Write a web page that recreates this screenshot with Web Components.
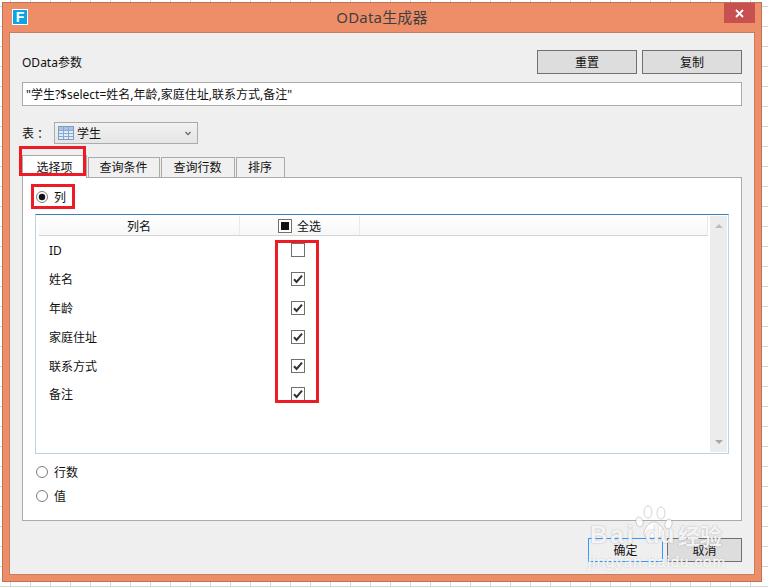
<!DOCTYPE html>
<html>
<head>
<meta charset="utf-8">
<title>OData生成器</title>
<style>
html,body{margin:0;height:100%;overflow:hidden;}
body{
    position:relative;
    background-color:#fff;
    background-image:linear-gradient(to right,#d6d6d6 1px,transparent 1px),linear-gradient(to bottom,#d6d6d6 1px,transparent 1px);
    background-size:20px 20px;
    background-position:10px 6px;
    font:12px "Noto Sans","Noto Sans CJK SC",sans-serif;
    color:#111;
}
</style>
</head>
<body>
<dlg-window heading="OData生成器">
    <dlg-form></dlg-form>
</dlg-window>
<red-mark style="left:19px;top:146px;width:67px;height:30px"></red-mark>
<red-mark style="left:31px;top:184px;width:44px;height:25px"></red-mark>
<red-mark style="left:275px;top:240px;width:44px;height:163px"></red-mark>
<baidu-mark></baidu-mark>

<script>
class DlgWindow extends HTMLElement{
    constructor(){
        super()
        this.attachShadow({mode:'open'})
    }
    connectedCallback(){
        this.shadowRoot.innerHTML = `
        <style>
            :host{
                display:block;box-sizing:border-box;
                margin:2px 0 0 2px;width:760px;height:580px;
                background:#ed8e69;border:1px solid #bd7355;
            }
            .bar{display:flex;align-items:flex-start;height:30px;}
            .logo{
                box-sizing:border-box;width:16px;height:16px;margin:6px 0 0 9px;
                background:#0aa5e8;border:1px solid #fff;color:#fff;
                font:bold 14px/14px "Liberation Sans",sans-serif;text-align:center;
            }
            h1{
                flex:1;margin:0 0 0 12px;padding:3px 0 0 0;text-align:center;
                font-size:15px;line-height:22px;font-weight:400;color:#3f3f3f;letter-spacing:.2px;
            }
            .close{
                display:flex;align-items:center;justify-content:center;
                width:31px;height:20px;margin-right:6px;background:#c75050;
            }
            .body{
                box-sizing:border-box;margin:0 7px;height:541px;
                background:#efefef;box-shadow:0 0 0 1px #c67e60;
            }
        </style>
        <div class="bar">
            <div class="logo">F</div>
            <h1>${this.getAttribute('heading')}</h1>
            <div class="close">
                <svg width="9" height="9" viewBox="0 0 9 9"><path d="M1 1 8 8M8 1 1 8" stroke="#fff" stroke-width="1.8"/></svg>
            </div>
        </div>
        <div class="body"><slot></slot></div>
        `
    }
}

class DlgButton extends HTMLElement{
    constructor(){
        super()
        this.attachShadow({mode:'open'})
    }
    connectedCallback(){
        this.shadowRoot.innerHTML = `
        <style>
            :host{
                display:flex;align-items:center;justify-content:center;box-sizing:border-box;
                width:var(--w,100px);height:24px;background:#ddd;border:1px solid #707070;
            }
            :host([focused]){background:#efefef;border-color:#3399ff;}
        </style>
        <slot></slot>
        `
    }
}

class DlgCombo extends HTMLElement{
    constructor(){
        super()
        this.attachShadow({mode:'open'})
    }
    connectedCallback(){
        this.shadowRoot.innerHTML = `
        <style>
            :host{
                display:flex;align-items:center;box-sizing:border-box;
                width:144px;height:22px;padding:0 6px 0 3px;
                border:1px solid #ababab;background:linear-gradient(#f1f1f1,#e5e5e5);
            }
            svg{display:block;}
            .text{flex:1;margin-left:3px;}
        </style>
        <svg width="16" height="14" viewBox="0 0 16 14">
            <rect x=".5" y=".5" width="15" height="13" fill="#e3edf8" stroke="#7b9cc6"/>
            <rect x="1" y="1" width="14" height="3" fill="#a9c4e6"/>
            <path d="M1 4.5H15M1 7.5H15M1 10.5H15M5.5 1V13M10.5 1V13" stroke="#8aa8cf" fill="none"/>
        </svg>
        <div class="text"><slot></slot></div>
        <svg width="6" height="5" viewBox="0 0 6 5"><path d="M.5 1 3 3.6 5.5 1" stroke="#666" stroke-width="1.3" fill="none"/></svg>
        `
    }
}

class DlgTabs extends HTMLElement{
    constructor(){
        super()
        this.attachShadow({mode:'open'})
    }
    connectedCallback(){
        const tabs = this.getAttribute('items').split(',')
        this.shadowRoot.innerHTML = `
        <style>
            :host{display:flex;align-items:flex-end;height:23px;margin-bottom:-1px;position:relative;}
            div{
                box-sizing:border-box;height:21px;margin-right:1px;border:1px solid #ababab;
                background:#f0f0f0;display:flex;align-items:center;justify-content:center;
                padding:0 1px 1px 0;
            }
            .on{height:23px;background:#fff;border-bottom:0;padding:0;}
        </style>
        ${tabs.map((t,i)=>`<div class="${i==0?'on':''}" style="width:${[65,72,74,49][i]}px">${t}</div>`).join('')}
        `
    }
}

class DlgRadio extends HTMLElement{
    constructor(){
        super()
        this.attachShadow({mode:'open'})
    }
    connectedCallback(){
        const dot = this.hasAttribute('checked') ? '<circle cx="6" cy="6" r="3.2" fill="#111"/>' : ''
        this.shadowRoot.innerHTML = `
        <style>
            :host{display:flex;align-items:center;height:20px;margin-left:1px;}
            svg{margin-right:6px;}
        </style>
        <svg width="12" height="12" viewBox="0 0 12 12"><circle cx="6" cy="6" r="5.5" fill="#fff" stroke="#7a7a7a"/>${dot}</svg>
        <slot></slot>
        `
    }
}

class DlgCheck extends HTMLElement{
    constructor(){
        super()
        this.attachShadow({mode:'open'})
    }
    connectedCallback(){
        const state = this.getAttribute('state')
        let mark = ''
        if(state=='on') mark = '<path d="M3 7.2 5.6 10 11 3.6" stroke="#333" stroke-width="2" fill="none"/>'
        if(state=='mixed') mark = '<rect x="3" y="3" width="8" height="8" fill="#111"/>'
        this.shadowRoot.innerHTML = `
        <style>
            :host{display:block;width:14px;height:14px;}
            svg{display:block;}
        </style>
        <svg width="14" height="14" viewBox="0 0 14 14"><rect x=".5" y=".5" width="13" height="13" fill="#fff" stroke="#707070"/>${mark}</svg>
        `
    }
}

class DlgGrid extends HTMLElement{
    constructor(){
        super()
        this.attachShadow({mode:'open'})
    }
    connectedCallback(){
        const rows = [['ID',''],['姓名','on'],['年龄','on'],['家庭住址','on'],['联系方式','on'],['备注','on']]
        this.shadowRoot.innerHTML = `
        <style>
            :host{
                display:flex;box-sizing:border-box;width:694px;height:240px;margin-top:7px;
                padding:1px 1px 1px 3px;
                border:1px solid #b9d4e6;border-top-color:#3b7fb5;
            }
            .main{flex:1;margin-right:2px;}
            .head{
                display:grid;grid-template-columns:201px 120px 1fr;height:20px;box-sizing:border-box;
                border-bottom:1px solid #d4d4d4;background:linear-gradient(#fff,#f6f7f6);
            }
            .head div{display:flex;align-items:center;border-right:1px solid #e9e9e9;box-sizing:border-box;}
            .head .name{justify-content:center;}
            .head .all{padding-left:38px;gap:5px;}
            .row{display:grid;grid-template-columns:201px 1fr;height:28.8px;align-items:center;}
            .row span{padding-left:10px;}
            .row dlg-check{margin-left:51px;}
            .bar{
                width:17px;background:#ececec;display:flex;flex-direction:column;
                justify-content:space-between;align-items:center;padding:8px 0;box-sizing:border-box;
            }
            svg{display:block;}
        </style>
        <div class="main">
            <div class="head">
                <div class="name">列名</div>
                <div class="all"><dlg-check state="mixed"></dlg-check>全选</div>
                <div></div>
            </div>
            ${rows.map(r=>`<div class="row"><span>${r[0]}</span><dlg-check state="${r[1]}"></dlg-check></div>`).join('')}
        </div>
        <div class="bar">
            <svg width="8" height="4" viewBox="0 0 8 4"><path d="M4 0 8 4H0Z" fill="#bdbdbd"/></svg>
            <svg width="8" height="4" viewBox="0 0 8 4"><path d="M0 0H8L4 4Z" fill="#a8a8a8"/></svg>
        </div>
        `
    }
}

class DlgForm extends HTMLElement{
    constructor(){
        super()
        this.attachShadow({mode:'open'})
    }
    connectedCallback(){
        this.shadowRoot.innerHTML = `
        <style>
            :host{display:block;padding:17px 12px 0;}
            .top{display:flex;align-items:center;gap:5px;height:24px;}
            .top .title{flex:1;}
            .input{
                box-sizing:border-box;height:24px;margin-top:8px;padding-left:3px;
                display:flex;align-items:center;background:#fff;border:1px solid #ababab;
            }
            .table{display:flex;align-items:center;height:22px;margin-top:16px;}
            .table label{width:32px;letter-spacing:3px;white-space:nowrap;}
            dlg-tabs{margin-top:11px;}
            .panel{
                box-sizing:border-box;height:344px;padding:9px 0 0 12px;
                background:#fff;border:1px solid #ababab;
            }
            .after{margin-top:8px;}
            .after + dlg-radio{margin-top:4px;}
            .foot{display:flex;justify-content:flex-end;gap:4px;margin-top:17px;--w:75px;}
        </style>
        <div class="top">
            <div class="title">OData参数</div>
            <dlg-button>重置</dlg-button>
            <dlg-button>复制</dlg-button>
        </div>
        <div class="input">"学生?$select=姓名,年龄,家庭住址,联系方式,备注"</div>
        <div class="table">
            <label>表：</label>
            <dlg-combo>学生</dlg-combo>
        </div>
        <dlg-tabs items="选择项,查询条件,查询行数,排序"></dlg-tabs>
        <div class="panel">
            <dlg-radio checked>列</dlg-radio>
            <dlg-grid></dlg-grid>
            <dlg-radio class="after">行数</dlg-radio>
            <dlg-radio>值</dlg-radio>
        </div>
        <div class="foot">
            <dlg-button focused>确定</dlg-button>
            <dlg-button>取消</dlg-button>
        </div>
        `
    }
}

class RedMark extends HTMLElement{
    constructor(){
        super()
        this.attachShadow({mode:'open'})
    }
    connectedCallback(){
        this.shadowRoot.innerHTML = `
        <style>
            :host{position:absolute;display:block;box-sizing:border-box;border:3px solid #ed1c24;}
        </style>
        `
    }
}

class BaiduMark extends HTMLElement{
    constructor(){
        super()
        this.attachShadow({mode:'open'})
    }
    connectedCallback(){
        this.shadowRoot.innerHTML = `
        <style>
            :host{
                position:absolute;display:block;left:586px;top:503px;width:142px;height:68px;
                color:rgba(255,255,255,.88);pointer-events:none;
                text-shadow:0 0 1.5px rgba(110,110,110,.6);
            }
            div,svg{position:absolute;white-space:nowrap;}
            .bai{left:4px;top:18px;font:bold 24px/28px "Liberation Sans",sans-serif;letter-spacing:3px;}
            .du{left:59px;top:18px;font:bold 24px/28px "Liberation Sans",sans-serif;}
            .jy{left:92px;top:17px;font:bold 22px/28px "Noto Sans CJK SC",sans-serif;}
            .url{left:2px;top:50px;font:15px/18px "Liberation Sans",sans-serif;letter-spacing:1px;-webkit-text-stroke:.4px rgba(255,255,255,.88);}
            svg{left:49px;top:2px;}
        </style>
        <svg width="38" height="34" viewBox="0 0 38 34" fill="rgba(255,255,255,.85)" stroke="rgba(150,150,150,.5)" stroke-width=".8">
            <ellipse cx="4.5" cy="17" rx="3.5" ry="5" transform="rotate(-15 4.5 17)"/>
            <ellipse cx="13" cy="7" rx="4" ry="6"/>
            <ellipse cx="26" cy="8" rx="4" ry="6"/>
            <ellipse cx="33.5" cy="19" rx="3.5" ry="5" transform="rotate(15 33.5 19)"/>
            <path d="M19 17c5 0 9 6 10 10 1 5-4 6-10 6s-11-1-10-6c1-4 5-10 10-10Z"/>
        </svg>
        <div class="bai">Bai</div>
        <div class="du">du</div>
        <div class="jy">经验</div>
        <div class="url">jingyan.baidu.com</div>
        `
    }
}

customElements.define('dlg-window',DlgWindow)
customElements.define('dlg-button',DlgButton)
customElements.define('dlg-combo',DlgCombo)
customElements.define('dlg-tabs',DlgTabs)
customElements.define('dlg-radio',DlgRadio)
customElements.define('dlg-check',DlgCheck)
customElements.define('dlg-grid',DlgGrid)
customElements.define('dlg-form',DlgForm)
customElements.define('red-mark',RedMark)
customElements.define('baidu-mark',BaiduMark)
</script>
</body>
</html>
